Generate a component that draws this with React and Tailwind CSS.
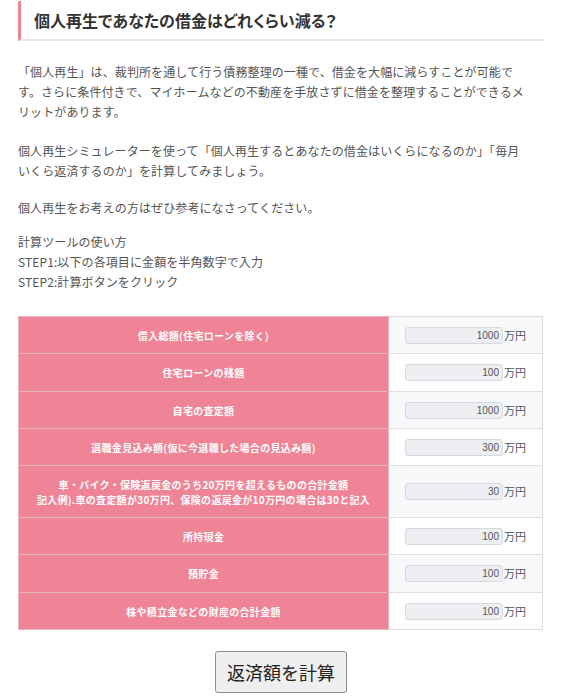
const rows = [
  { label: ["借入総額(住宅ローンを除く)"], value: "1000", h: "h-[37px]" },
  { label: ["住宅ローンの残額"], value: "100", h: "h-[38px]" },
  { label: ["自宅の査定額"], value: "1000", h: "h-[37px]" },
  { label: ["退職金見込み額(仮に今退職した場合の見込み額)"], value: "300", h: "h-[37px]" },
  {
    label: [
      "車・バイク・保険返戻金のうち20万円を超えるものの合計金額",
      "記入例).車の査定額が30万円、保険の返戻金が10万円の場合は30と記入",
    ],
    value: "30",
    h: "h-[52px]",
  },
  { label: ["所持現金"], value: "100", h: "h-[37px]" },
  { label: ["預貯金"], value: "100", h: "h-[38px]" },
  { label: ["株や積立金などの財産の合計金額"], value: "100", h: "h-[37px]" },
];

const jp = "font-['Noto_Sans_CJK_JP',sans-serif]";

export default function App() {
  return (
    <div className={`w-[562px] min-h-[700px] bg-white px-[18px] pt-px ${jp}`}>
      <h2 className="border-l-[3px] border-[#f08396] border-b-2 border-b-[#e8e8e8] pl-[13px] h-[40px] flex items-center text-[16px] font-bold text-[#333] [font-feature-settings:'palt']">
        個人再生であなたの借金はどれくらい減る？
      </h2>

      <div className="mt-[21px] text-[12px] leading-[20px] text-[#555] tracking-[0.1px]">
        <p className="mb-[19px]">
          「個人再生」は、裁判所を通して行う債務整理の一種で、借金を大幅に減らすことが可能で
          <br />
          す。さらに条件付きで、マイホームなどの不動産を手放さずに借金を整理することができるメ
          <br />
          リットがあります。
        </p>
        <p className="mb-[17px]">
          個人再生シミュレーターを使って「個人再生するとあなたの借金はいくらになるのか」「毎月
          <br />
          いくら返済するのか」を計算してみましょう。
        </p>
        <p className="mb-[14px]">個人再生をお考えの方はぜひ参考になさってください。</p>
        <p>
          計算ツールの使い方
          <br />
          STEP1:以下の各項目に金額を半角数字で入力
          <br />
          STEP2:計算ボタンをクリック
        </p>
      </div>

      <table className="mt-[24px] w-[525px] border-collapse border border-[#dddddd]">
        <tbody>
          {rows.map((r, i) => (
            <tr key={i} className={r.h}>
              <td className="w-[370px] bg-[#f08497] border border-[#e3b5bd] text-center align-middle text-white text-[10px] font-bold leading-[15px] tracking-[0.3px]">
                {r.label.map((l, j) => (
                  <div key={j}>{l}</div>
                ))}
              </td>
              <td
                className={`border border-[#dddddd] align-middle ${
                  i % 2 === 0 ? "bg-[#f8f9fb]" : "bg-white"
                }`}
              >
                <div className="flex items-center justify-center gap-[1px]">
                  <input
                    readOnly
                    value={r.value}
                    className="w-[98px] h-[17px] rounded-[3px] border border-[#d6d9de] bg-[#eceef2] text-right pr-[3px] text-[10px] text-[#555] font-['Liberation_Sans',sans-serif] outline-none"
                  />
                  <span className="text-[11px] text-[#555]">万円</span>
                </div>
              </td>
            </tr>
          ))}
        </tbody>
      </table>

      <div className="flex justify-center mt-[21px]">
        <button className="w-[132px] h-[42px] bg-[#efefef] border border-[#8f8f8f] rounded-[3px] text-[18px] text-[#222]">
          返済額を計算
        </button>
      </div>
    </div>
  );
}
